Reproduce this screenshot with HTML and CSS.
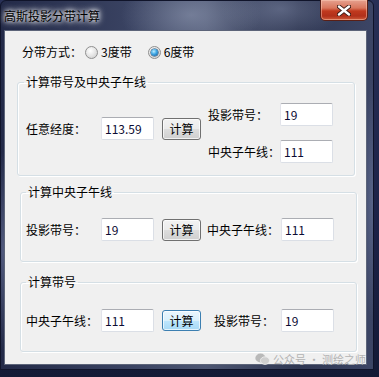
FILE: index.html
```html
<!DOCTYPE html>
<html lang="zh-CN">
<head>
    <meta charset="UTF-8">
    <title>高斯投影分带计算</title>
    <link rel="stylesheet" href="styles.css">
</head>
<body>
<div class="window">
    <div class="titlebar">
        <span class="title">高斯投影分带计算</span>
        <button class="close" aria-label="关闭">
            <svg width="14" height="11" viewBox="0 0 14 11">
                <path d="M2 1.5 L12 9.5 M12 1.5 L2 9.5" stroke="#3a1a14" stroke-width="4.2" stroke-linecap="round"/>
                <path d="M2 1.5 L12 9.5 M12 1.5 L2 9.5" stroke="#ffffff" stroke-width="2.4" stroke-linecap="round"/>
            </svg>
        </button>
    </div>

    <div class="client">
        <div class="mode-row">
            <span class="mode-label">分带方式：</span>
            <label class="radio"><span class="dot"></span>3度带</label>
            <label class="radio checked"><span class="dot"></span>6度带</label>
        </div>

        <fieldset class="group group-first">
            <legend>计算带号及中央子午线</legend>
            <div class="group-body">
                <div class="cell cell-left">
                    <span class="label lbl-wide">任意经度：</span>
                    <span class="field">113.59</span>
                    <button class="btn">计算</button>
                </div>
                <div class="stack">
                    <div class="cell">
                        <span class="label lbl-mid">投影带号：</span>
                        <span class="field">19</span>
                    </div>
                    <div class="cell">
                        <span class="label lbl-mid">中央子午线：</span>
                        <span class="field">111</span>
                    </div>
                </div>
            </div>
        </fieldset>

        <fieldset class="group group-mid">
            <legend>计算中央子午线</legend>
            <div class="row row-two">
                <span class="label lbl-wide">投影带号：</span>
                <span class="field">19</span>
                <button class="btn">计算</button>
                <span class="label lbl-right">中央子午线：</span>
                <span class="field">111</span>
            </div>
        </fieldset>

        <fieldset class="group group-last">
            <legend>计算带号</legend>
            <div class="row row-three">
                <span class="label lbl-wide">中央子午线：</span>
                <span class="field">111</span>
                <button class="btn btn-focus">计算</button>
                <span class="label lbl-right lbl-short">投影带号：</span>
                <span class="field">19</span>
            </div>
        </fieldset>
    </div>

    <div class="watermark">
        <svg width="15" height="12" viewBox="0 0 15 12">
            <ellipse cx="5.5" cy="5" rx="5.2" ry="4.4" fill="#b9b9b9"/>
            <ellipse cx="10" cy="7.6" rx="4.6" ry="3.8" fill="#cfcfcf" stroke="#f0f0f0" stroke-width="0.8"/>
        </svg>
        <span>公众号 · 测绘之师</span>
    </div>
</div>
</body>
</html>
```

FILE: styles.css
```css
html, body {
    margin: 0;
    height: 100%;
    overflow: hidden;
}

body {
    background: linear-gradient(180deg, #283056 0%, #1c2247 60%, #141a36 100%);
    font-family: "Noto Sans CJK SC", "Noto Sans", sans-serif;
    font-size: 12px;
    color: #000;
}

.window {
    position: relative;
    width: 374px;
    height: 370px;
    box-sizing: border-box;
    border: 1px solid #10142a;
    border-radius: 6px 6px 0 0;
    padding: 0 6px 4px 3px;
    display: flex;
    flex-direction: column;
    background:
        radial-gradient(ellipse 70px 40px at 190px 14px, rgba(150, 160, 185, 0.55), transparent),
        radial-gradient(ellipse 60px 30px at 280px 8px, rgba(130, 140, 170, 0.5), transparent),
        radial-gradient(ellipse 12px 120px at 372px 200px, rgba(120, 135, 175, 0.5), transparent),
        radial-gradient(ellipse 10px 100px at 2px 250px, rgba(120, 130, 170, 0.55), transparent),
        linear-gradient(90deg, #232a48 0%, #3a4362 35%, #4d5672 55%, #2f3752 80%, #3c4565 100%);
}

.titlebar {
    height: 29px;
    display: flex;
    align-items: flex-start;
    justify-content: space-between;
}

.title {
    margin-top: 6px;
    line-height: 18px;
    font-size: 12px;
    color: #000;
    text-shadow: 0 0 4px #fff, 0 0 6px rgba(255, 255, 255, 0.9), 0 0 8px rgba(255, 255, 255, 0.6);
}

.close {
    width: 48px;
    height: 21px;
    margin: -1px -1px 0 0;
    padding: 0;
    border: 1px solid #5a1f16;
    border-top: none;
    border-radius: 0 0 5px 5px;
    background: linear-gradient(180deg, #e6a18f 0%, #d9765d 40%, #c0391e 55%, #b1301a 80%, #cf5b3a 100%);
    box-shadow: inset 0 0 0 1px rgba(255, 210, 190, 0.45);
    display: flex;
    align-items: center;
    justify-content: center;
}

.client {
    width: 363px;
    height: 335px;
    box-sizing: border-box;
    border: 1px solid #5c6479;
    background: #f0f0f0;
    padding: 0 0 0 12px;
}

.mode-row {
    display: flex;
    align-items: center;
    height: 20px;
    margin: 11px 0 0 5px;
    line-height: 16px;
}

.mode-label {
    width: 63px;
}

.radio {
    display: flex;
    align-items: center;
    margin-right: 16px;
}

.dot {
    width: 13px;
    height: 13px;
    box-sizing: border-box;
    border-radius: 50%;
    border: 1px solid #8f8f8f;
    background: radial-gradient(circle at 40% 35%, #ffffff 0%, #e8e8e8 45%, #c9c9c9 100%);
    margin-right: 3px;
    display: flex;
    align-items: center;
    justify-content: center;
}

.checked .dot::after {
    content: "";
    width: 7px;
    height: 7px;
    border-radius: 50%;
    background: radial-gradient(circle at 40% 35%, #bfeeff 0%, #3ea6e4 45%, #0e4f8f 100%);
    box-shadow: 0 0 0 0.5px #103a63;
}

.group {
    margin: 0;
    padding: 0;
    box-sizing: border-box;
    border: 1px solid #d5dfe5;
    border-radius: 3px;
    box-shadow: inset 1px 1px 0 #fff, 1px 1px 0 #fff;
    min-width: 0;
}

.group legend {
    margin-left: 6px;
    padding: 0 2px;
    line-height: 16px;
}

.group-first {
    width: 338px;
    height: 102px;
    margin-top: 12px;
}

.group-mid,
.group-last {
    width: 337px;
    height: 78px;
    margin-left: 3px;
}

.group-mid {
    margin-top: 8px;
}

.group-last {
    margin-top: 12px;
}

.group-mid legend,
.group-last legend {
    margin-left: 5px;
}

.group-body {
    display: flex;
    align-items: flex-start;
    padding-left: 8px;
}

.cell {
    display: flex;
    align-items: center;
}

.cell-left {
    margin-top: 27px;
}

.stack {
    display: flex;
    flex-direction: column;
    gap: 14px;
    margin: 13px 0 0 7px;
}

.row {
    display: flex;
    align-items: center;
    padding-left: 5px;
}

.row-two {
    margin-top: 18px;
}

.row-three {
    margin-top: 19px;
}

.label {
    line-height: 16px;
    white-space: nowrap;
}

.lbl-wide {
    width: 75px;
}

.lbl-mid {
    width: 72px;
}

.lbl-right {
    width: 74px;
    margin-left: 6px;
}

.lbl-short {
    width: 67px;
    margin-left: 13px;
}

.field {
    width: 53px;
    height: 23px;
    box-sizing: border-box;
    background: #fff;
    border: 1px solid #dbdfe6;
    border-top-color: #abadb3;
    border-left-color: #e2e3ea;
    border-radius: 2px;
    padding: 0 3px;
    line-height: 21px;
    color: #0b0b33;
}

.btn {
    width: 39px;
    height: 22px;
    margin-left: 8px;
    padding: 0;
    box-sizing: border-box;
    border: 1px solid #707070;
    border-radius: 3px;
    background: linear-gradient(180deg, #f2f2f2 0%, #ebebeb 50%, #dddddd 51%, #cfcfcf 100%);
    box-shadow: inset 0 0 0 1px rgba(255, 255, 255, 0.7);
    font-family: inherit;
    font-size: 12px;
    line-height: 16px;
    color: #000;
}

.btn-focus {
    height: 21px;
    border-color: #3c7fb1;
    background: linear-gradient(180deg, #eaf6fd 0%, #d9f0fc 50%, #bee6fd 51%, #a7d9f5 100%);
}

.watermark {
    position: absolute;
    right: 7px;
    bottom: 3px;
    display: flex;
    align-items: center;
    gap: 3px;
    font-size: 11px;
    line-height: 14px;
    color: #b3b3b3;
}
```
